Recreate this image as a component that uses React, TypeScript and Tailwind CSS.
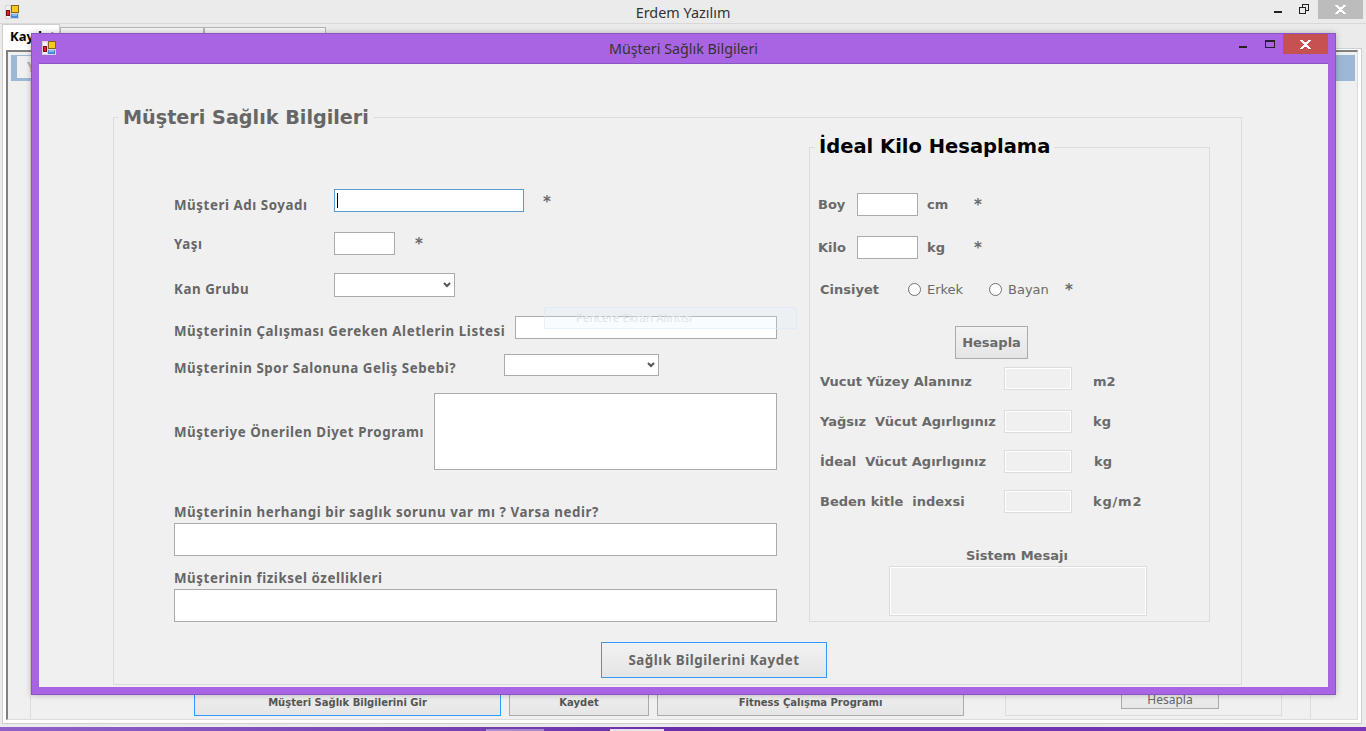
import React from 'react';

const AppIcon = ({ className }: { className?: string }) => (
  <svg viewBox="0 0 14 14" className={className} shapeRendering="crispEdges">
    <rect x="0" y="0" width="14" height="14" fill="#d4d4d4" />
    <rect x="1" y="1" width="4" height="4" fill="#f1f1f1" />
    <rect x="1" y="10" width="4" height="3" fill="#f1f1f1" />
    <rect x="6" y="0" width="8" height="8" fill="#7a6a20" />
    <rect x="7" y="1" width="6" height="6" fill="#f8c820" />
    <rect x="1" y="5" width="4" height="6" fill="#7a1010" />
    <rect x="2" y="6" width="2" height="4" fill="#e02020" />
    <rect x="6" y="9" width="7" height="4" fill="#4d88d8" />
    <rect x="7" y="9" width="5" height="2" fill="#8ab8f0" />
  </svg>
);

const CloseGlyph = () => (
  <svg viewBox="0 0 11 9" className="w-[11px] h-[9px]" shapeRendering="crispEdges" fill="#fff">
    <path d="M0 0h3v1h1v1h3V1h1V0h3v1h-1v1H9v1H8v1H7v1h1v1h1v1h1v1h1v1H8V8H7V7H4v1H3v1H0V8h1V7h1V6h1V5h1V4H3V3H2V2H1V1H0z" />
  </svg>
);

const Star = ({ className }: { className?: string }) => (
  <span className={`text-[15px] leading-4 font-bold text-[#6a6a6a] ${className ?? ''}`}>*</span>
);

const Legend = ({ children, className }: { children: React.ReactNode; className: string }) => (
  <span className={`absolute bg-[#f0f0f0] font-bold whitespace-nowrap ${className}`}>{children}</span>
);

const boxClass = 'block border border-[#ababab] bg-white';
const leftLabel = "font-['Noto_Sans',sans-serif] text-[13.3px] tracking-[0.57px] leading-4 font-bold text-[#666] whitespace-nowrap";
const rightLabel = 'text-[13px] leading-4 font-bold text-[#6a6a6a] whitespace-pre';
const readoutBox = 'w-[68px] h-[23px] border border-[#dcdcdc] shadow-[inset_0_0_0_1px_#fff] bg-[#f0f0f0]';

const Select = ({ className }: { className: string }) => (
  <div className="relative">
    <select className={`${boxClass} appearance-none ${className}`} />
    <svg viewBox="0 0 8 6" className="absolute right-[4px] top-1/2 -mt-[3px] w-[8px] h-[6px] pointer-events-none">
      <path d="M1 1l3 3 3-3" fill="none" stroke="#555" strokeWidth="2" />
    </svg>
  </div>
);

const CustomerForm = () => (
  <div className="w-[603px] mt-[71px] ml-[60px] flex flex-col">
    <div className="flex items-start h-[23px]">
      <label className={`${leftLabel} w-[160px] mt-[8px]`}>Müşteri Adı Soyadı</label>
      <div className="relative">
        <input className="block w-[190px] h-[23px] border border-[#5b9bd5] bg-white" />
        <span className="absolute left-[3px] top-[4px] w-px h-[15px] bg-black" />
      </div>
      <Star className="ml-[19px] mt-[5px]" />
    </div>

    <div className="flex items-start h-[23px] mt-[20px]">
      <label className={`${leftLabel} w-[160px] mt-[4px]`}>Yaşı</label>
      <input className={`${boxClass} w-[61px] h-[23px]`} />
      <Star className="ml-[20px] mt-[4px]" />
    </div>

    <div className="flex items-start h-[24px] mt-[18px]">
      <label className={`${leftLabel} w-[160px] mt-[8px]`}>Kan Grubu</label>
      <Select className="w-[121px] h-[24px]" />
    </div>

    <div className="flex items-start h-[23px] mt-[19px]">
      <label className={`${leftLabel} w-[341px] mt-[7px]`}>Müşterinin Çalışması Gereken Aletlerin Listesi</label>
      <input className={`${boxClass} w-[262px] h-[23px]`} />
    </div>

    <div className="flex items-start h-[22px] mt-[15px]">
      <label className={`${leftLabel} w-[330px] mt-[6px]`}>Müşterinin Spor Salonuna Geliş Sebebi?</label>
      <Select className="w-[155px] h-[22px]" />
    </div>

    <div className="flex items-start h-[77px] mt-[17px]">
      <label className={`${leftLabel} w-[260px] mt-[31px]`}>Müşteriye Önerilen Diyet Programı</label>
      <textarea className={`${boxClass} w-[343px] h-[77px] resize-none`} />
    </div>

    <label className={`${leftLabel} mt-[34px]`}>Müşterinin herhangi bir saglık sorunu var mı ? Varsa nedir?</label>
    <input className={`${boxClass} w-full h-[33px] mt-[3px]`} />

    <label className={`${leftLabel} mt-[14px]`}>Müşterinin fiziksel özellikleri</label>
    <input className={`${boxClass} w-full h-[33px] mt-[3px]`} />

    <button className={`${leftLabel} w-[226px] h-[36px] mt-[20px] ml-[427px] border border-[#3399ff] bg-gradient-to-b from-[#f2f2f2] to-[#e5e5e5]`}>
      Sağlık Bilgilerini Kaydet
    </button>
  </div>
);

const Readout = ({ label, unit, className, labelClass, unitClass }: { label: string; unit: string; className: string; labelClass?: string; unitClass?: string }) => (
  <div className={`flex items-center ml-[10px] ${className}`}>
    <span className={`${rightLabel} w-[184px] ${labelClass ?? ''}`}>{label}</span>
    <div className={readoutBox} />
    <span className={`${rightLabel} ${labelClass ?? ''} ${unitClass ?? 'ml-[21px]'}`}>{unit}</span>
  </div>
);

const IdealWeightPanel = () => (
  <div className="relative w-[401px] h-[475px] mt-[29px] ml-[32px] border border-[#dcdcdc] flex flex-col">
    <Legend className="left-[5px] top-[-13px] px-[4px] text-[19.5px] leading-6 text-black">İdeal Kilo Hesaplama</Legend>

    <div className="flex items-start ml-[8px] mt-[45px]">
      <span className={`${rightLabel} w-[39px] mt-[4px]`}>Boy</span>
      <input className={`${boxClass} w-[61px] h-[23px]`} />
      <span className={`${rightLabel} w-[47px] ml-[9px] mt-[4px]`}>cm</span>
      <Star className="mt-[4px]" />
    </div>

    <div className="flex items-start ml-[8px] mt-[20px]">
      <span className={`${rightLabel} w-[39px] mt-[4px]`}>Kilo</span>
      <input className={`${boxClass} w-[61px] h-[23px]`} />
      <span className={`${rightLabel} w-[47px] ml-[9px] mt-[4px]`}>kg</span>
      <Star className="mt-[4px]" />
    </div>

    <div className="flex items-center ml-[10px] mt-[22px] h-4">
      <span className={`${rightLabel} w-[88px] mt-[2px]`}>Cinsiyet</span>
      <input type="radio" name="cinsiyet" className="appearance-none size-[13px] rounded-full border border-[#707070] bg-white" />
      <span className="text-[13px] leading-4 text-[#6a6a6a] ml-[6px] w-[62px] mt-[2px]">Erkek</span>
      <input type="radio" name="cinsiyet" className="appearance-none size-[13px] rounded-full border border-[#707070] bg-white" />
      <span className="text-[13px] leading-4 text-[#6a6a6a] ml-[6px] w-[57px] mt-[2px]">Bayan</span>
      <Star className="mt-[2px]" />
    </div>

    <button className={`${rightLabel} w-[73px] h-[33px] ml-[145px] mt-[29px] border border-[#ababab] bg-gradient-to-b from-[#f2f2f2] to-[#e5e5e5]`}>
      Hesapla
    </button>

    <Readout className="mt-[7px]" labelClass="mt-[8px]" label="Vucut Yüzey Alanınız" unit="m2" />
    <Readout className="mt-[20px]" label="Yağsız  Vücut Agırlıgınız" unit="kg" />
    <Readout className="mt-[17px]" label="İdeal  Vücut Agırlıgınız" unit="kg" unitClass="ml-[22px]" />
    <Readout className="mt-[17px]" label="Beden kitle  indexsi" unit="kg/m2" unitClass="ml-[21px] tracking-[0.8px]" />

    <span className={`${rightLabel} ml-[156px] mt-[35px]`}>Sistem Mesajı</span>
    <div className="w-[258px] h-[50px] ml-[79px] mt-[2px] border border-[#dcdcdc] shadow-[inset_0_0_0_1px_#fff]" />
  </div>
);

const HealthDialog = () => (
  <div className="absolute z-20 left-[31px] top-[33px] w-[1305px] h-[662px] flex flex-col border border-[#8c55c4] bg-[#a864e2] shadow-[0_0_6px_rgba(0,0,0,0.25)] font-['DejaVu_Sans',sans-serif]">
    <div className="relative h-[29px] shrink-0 flex items-center justify-center">
      <AppIcon className="absolute left-[10px] top-[7px] w-[14px] h-[14px]" />
      <span className="font-['Noto_Sans',sans-serif] text-[14.3px] text-[#333]">Müşteri Sağlık Bilgileri</span>
      <div className="absolute right-[7px] top-0 flex items-start">
        <span className="w-[8px] h-[2px] bg-[#222] mt-[12px]" />
        <span className="w-[10px] h-[8px] mt-[6px] ml-[18px] border border-t-2 border-[#222]" />
        <span className="w-[45px] h-[20px] ml-[8px] bg-[#c75050] flex items-center justify-center"><CloseGlyph /></span>
      </div>
    </div>
    <div className="flex-1 mx-[7px] mb-[7px] border-t border-[#8c55c4] bg-[#f0f0f0] flex items-start">
      <div className="relative ml-[74px] mt-[53px] w-[1129px] h-[568px] border border-[#dcdcdc] flex items-start">
        <Legend className="left-[4px] top-[-12px] px-[5px] text-[19.2px] leading-6 text-[#666]">Müşteri Sağlık Bilgileri</Legend>
        <CustomerForm />
        <IdealWeightPanel />
      </div>
    </div>
  </div>
);

const BottomButton = ({ children, className }: { children: React.ReactNode; className: string }) => (
  <button className={`h-[30px] pt-[2px] text-[10px] font-bold text-[#555] font-['DejaVu_Sans',sans-serif] bg-gradient-to-b from-[#f0f0f0] to-[#e6e6e6] ${className}`}>
    {children}
  </button>
);

const MainWindow = () => (
  <div className="h-[727px] flex flex-col bg-[#ebebeb] font-['Noto_Sans',sans-serif]">
    <div className="relative h-[24px] shrink-0 flex items-center justify-center border-b border-[#d8d8d8]">
      <AppIcon className="absolute left-[5px] top-[5px] w-[14px] h-[14px]" />
      <span className="text-[14.4px] text-[#333] mt-[2px]">Erdem Yazılım</span>
      <div className="absolute right-[3px] top-0 flex items-start">
        <span className="w-[8px] h-[2px] bg-[#222] mt-[11px]" />
        <span className="relative w-[10px] h-[10px] mt-[4px] ml-[17px]">
          <span className="absolute left-[3px] top-0 w-[7px] h-[7px] border border-[#222]" />
          <span className="absolute left-0 top-[3px] w-[7px] h-[7px] border border-[#222] bg-[#ebebeb]" />
        </span>
        <span className="w-[45px] h-[19px] ml-[9px] bg-[#bcbcbc] flex items-center justify-center"><CloseGlyph /></span>
      </div>
    </div>

    <div className="flex h-[24px] ml-[2px] shrink-0">
      <div className="w-[58px] h-[25px] px-[7px] pt-[2px] bg-white border border-b-0 border-[#cfcfcf] text-[13px] font-bold text-black z-10">Kaydet</div>
      <div className="w-[144px] h-[22px] mt-[3px] bg-[#f4f4f4] border border-[#b5b5b5]" />
      <div className="w-[122px] h-[22px] mt-[3px] bg-[#f4f4f4] border border-[#b5b5b5]" />
    </div>

    <div className="flex-1 mx-[2px] mr-[4px] mb-[3px] border border-[#cfcfcf] bg-white pl-[3px] pt-px pr-[3px] pb-[3px] flex">
      <div className="flex-1 flex flex-col border-l-2 border-t-2 border-[#808080] border-r border-b border-r-[#dcdcdc] border-b-[#dcdcdc] bg-[#f0f0f0]">
        <div className="h-[26px] mx-[3px] mt-[3px] shrink-0 bg-[#9db8d6] px-[6px] pt-px pb-[3px] mr-[2px]">
          <div className="h-full w-[1318px] bg-[#f0f0f0] pl-[10px] text-[14px] font-bold text-[#b0aca4]">Y</div>
        </div>
        <div className="flex-1 ml-[22px] w-[1281px] border-x border-[#dcdcdc] flex items-end pb-[3px]">
          <BottomButton className="w-[307px] ml-[163px] border border-[#3399ff]">Müşteri Sağlık Bilgilerini Gir</BottomButton>
          <BottomButton className="w-[140px] ml-[8px] border border-[#ababab]">Kaydet</BottomButton>
          <BottomButton className="w-[307px] ml-[8px] border border-[#ababab]">Fitness Çalışma Programı</BottomButton>
          <div className="w-[277px] h-[30px] ml-[41px] border border-[#dcdcdc] flex items-end justify-start pb-[6px] pl-[115px]">
            <button className="w-[98px] h-[18px] border border-[#ababab] bg-gradient-to-b from-[#f0f0f0] to-[#e6e6e6] text-[12px] leading-4 text-[#666]">Hesapla</button>
          </div>
        </div>
      </div>
    </div>
  </div>
);

export default function App() {
  return (
    <div className="relative w-[1366px] h-[731px] overflow-hidden bg-gradient-to-r from-[#8f62c8] via-[#6a2fa8] to-[#7a38b8]">
      <MainWindow />
      <HealthDialog />
      {/* desktop taskbar peeking out under the window */}
      <div className="absolute left-[486px] top-[729px] w-[58px] h-[2px] bg-[#a88cc8]" />
      <div className="absolute left-[610px] top-[729px] w-[54px] h-[2px] bg-[#e8dff2]" />
      {/* screenshot tool hint fading over the form */}
      <div className="absolute z-30 left-[544px] top-[307px] w-[253px] h-[22px] flex items-center border border-[#dbe8f5]/60 bg-[#e0f0ff]/20 pointer-events-none">
        <span className="ml-[31px] text-[11.5px] text-[#dfe3e8] font-['Noto_Sans',sans-serif]">Pencere Ekran Alıntısı</span>
      </div>
    </div>
  );
}
